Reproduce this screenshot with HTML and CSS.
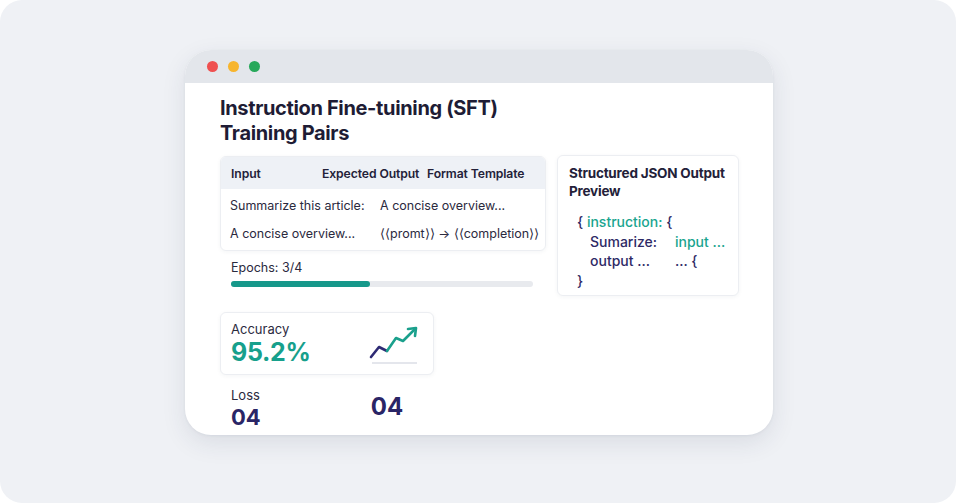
FILE: index.html
```html
<!DOCTYPE html>
<html lang="en">
<head>
  <meta charset="UTF-8" />
  <meta name="viewport" content="width=device-width, initial-scale=1" />
  <title>Instruction Fine-tuning | Training Pairs</title>
  <link rel="stylesheet" href="styles.css">
</head>
<body>
  <div class="frame">
    <div class="window">
      <div class="titlebar">
        <span class="dot red"></span>
        <span class="dot yellow"></span>
        <span class="dot green"></span>
      </div>

      <div class="content">
        <h1>Instruction Fine-tuining (SFT)<br>Training Pairs</h1>

        <div class="main">
          <div class="left">
            <div class="card table">
              <div class="thead">
                <span class="c1">Input</span>
                <span class="c2">Expected Output</span>
                <span>Format Template</span>
              </div>
              <div class="row">
                <span class="b1">Summarize this article:</span>
                <span>A concise overview...</span>
              </div>
              <div class="row">
                <span class="b1">A concise overview...</span>
                <span>&#10216;&#10216;promt&#10217;&#10217; &rarr; &#10216;&#10216;completion&#10217;&#10217;</span>
              </div>
            </div>

            <div class="epochs">Epochs: 3/4</div>
            <div class="bar"><div class="fill" style="width: 46%"></div></div>

            <div class="card metric">
              <div>
                <div class="label">Accuracy</div>
                <div class="big teal">95.2%</div>
              </div>
              <svg class="chart" width="52" height="40" viewBox="0 0 52 40">
                <line x1="3" y1="37" x2="48" y2="37" stroke="#e4e6ec" stroke-width="2" />
                <polyline points="2,31 10,21 18,25" fill="none" stroke="#2e2a74" stroke-width="2.6" stroke-linejoin="round" stroke-linecap="round" />
                <polyline points="18,25 27,12 34,15 46,3" fill="none" stroke="#1aa08c" stroke-width="2.6" stroke-linejoin="round" stroke-linecap="round" />
                <polyline points="39,3 47,2 46,10" fill="none" stroke="#1aa08c" stroke-width="2.6" stroke-linejoin="round" stroke-linecap="round" />
              </svg>
            </div>

            <div class="loss">
              <div>
                <div class="label">Loss</div>
                <div class="num">04</div>
              </div>
              <div class="num num2">04</div>
            </div>
          </div>

          <div class="card json">
            <h2>Structured JSON Output<br>Preview</h2>
            <div class="code">
              <div class="line"><span class="p">{</span> <span class="t">instruction:</span> <span class="p">{</span></div>
              <div class="line ind"><span class="k p">Sumarize:</span><span class="t">input ...</span></div>
              <div class="line ind"><span class="k p">output ...</span><span class="p">... {</span></div>
              <div class="line"><span class="p">}</span></div>
            </div>
          </div>
        </div>
      </div>
    </div>
  </div>
</body>
</html>
```

FILE: styles.css
```css
* {
  box-sizing: border-box;
}
body {
  margin: 0;
  background: #ffffff;
  font-family: Inter, "Noto Sans", sans-serif;
  color: #1f1d36;
}
.frame {
  width: 956px;
  height: 503px;
  background: #eff1f5;
  border-radius: 22px;
  padding: 50px 0 0 185px;
  overflow: hidden;
}
.window {
  width: 588px;
  height: 385px;
  background: #ffffff;
  border-radius: 26px;
  overflow: hidden;
  box-shadow: 0 8px 24px rgba(40, 50, 80, 0.10), 0 1px 3px rgba(40, 50, 80, 0.06);
}
.titlebar {
  height: 33px;
  background: #e3e6eb;
  display: flex;
  align-items: center;
  gap: 10px;
  padding: 0 0 0 22px;
}
.dot {
  width: 11px;
  height: 11px;
  border-radius: 50%;
}
.red { background: #ef5050; }
.yellow { background: #f7b52e; }
.green { background: #27a85a; }

.content {
  padding: 13px 0 0 35px;
}
h1 {
  margin: 0;
  font-size: 20px;
  line-height: 25px;
  font-weight: 700;
  color: #1e1c35;
  letter-spacing: -0.35px;
}
.main {
  display: flex;
  gap: 11px;
  margin-top: 10px;
  align-items: flex-start;
}
.left {
  width: 326px;
}
.card {
  background: #fff;
  border: 1px solid #eceef2;
  border-radius: 6px;
  box-shadow: 0 1px 4px rgba(40, 50, 80, 0.05);
}
.table {
  height: 95px;
  overflow: hidden;
  font-size: 12.5px;
}
.thead {
  display: flex;
  align-items: center;
  height: 32px;
  background: #eef1f6;
  padding-left: 10px;
  font-size: 12.2px;
  font-weight: 600;
  color: #232139;
  letter-spacing: -0.1px;
}
.thead .c1 { width: 91px; }
.thead .c2 { width: 105px; }
.row {
  display: flex;
  align-items: center;
  height: 28px;
  padding-left: 9px;
  color: #2b2a3e;
}
.thead + .row {
  margin-top: 2px;
}
.row .b1 {
  width: 150px;
}
.epochs {
  margin: 9px 0 0 11px;
  font-size: 12.5px;
  color: #2b2a3e;
}
.bar {
  margin: 6px 0 0 11px;
  width: 302px;
  height: 6px;
  border-radius: 3px;
  background: #e8eaee;
}
.fill {
  height: 6px;
  border-radius: 3px;
  background: #16988a;
}
.metric {
  margin-top: 25px;
  width: 214px;
  height: 63px;
  display: flex;
  align-items: center;
  justify-content: space-between;
  padding: 0 14px 0 10px;
}
.label {
  font-size: 13px;
  line-height: 16px;
  color: #2b2a3e;
}
.big {
  margin-top: 1px;
  font-size: 25px;
  line-height: 28px;
  font-weight: 700;
  letter-spacing: -0.3px;
}
.teal {
  color: #17a08c;
}
.chart {
  margin: 4px 0 0 0;
  position: relative;
  left: 2px;
}
.loss {
  display: flex;
  padding: 12px 0 0 11px;
}
.num {
  margin-top: 2px;
  font-size: 22px;
  line-height: 24px;
  font-weight: 700;
  color: #2a2566;
}
.num2 {
  margin: 8px 0 0 110px;
  font-size: 24px;
}
.json {
  width: 182px;
  height: 141px;
  margin-top: -1px;
  padding: 8px 4px 0 11px;
}
h2 {
  margin: 0;
  font-size: 13.5px;
  line-height: 18px;
  font-weight: 700;
  color: #232139;
  white-space: nowrap;
  letter-spacing: -0.2px;
}
.code {
  margin-top: 12px;
  padding-left: 8px;
  font-size: 14px;
  line-height: 19.5px;
  font-weight: 500;
}
.line.ind {
  display: flex;
  padding-left: 13px;
}
.k {
  width: 85px;
}
.p {
  color: #2e2a66;
}
.t {
  color: #1aa58f;
}
```
